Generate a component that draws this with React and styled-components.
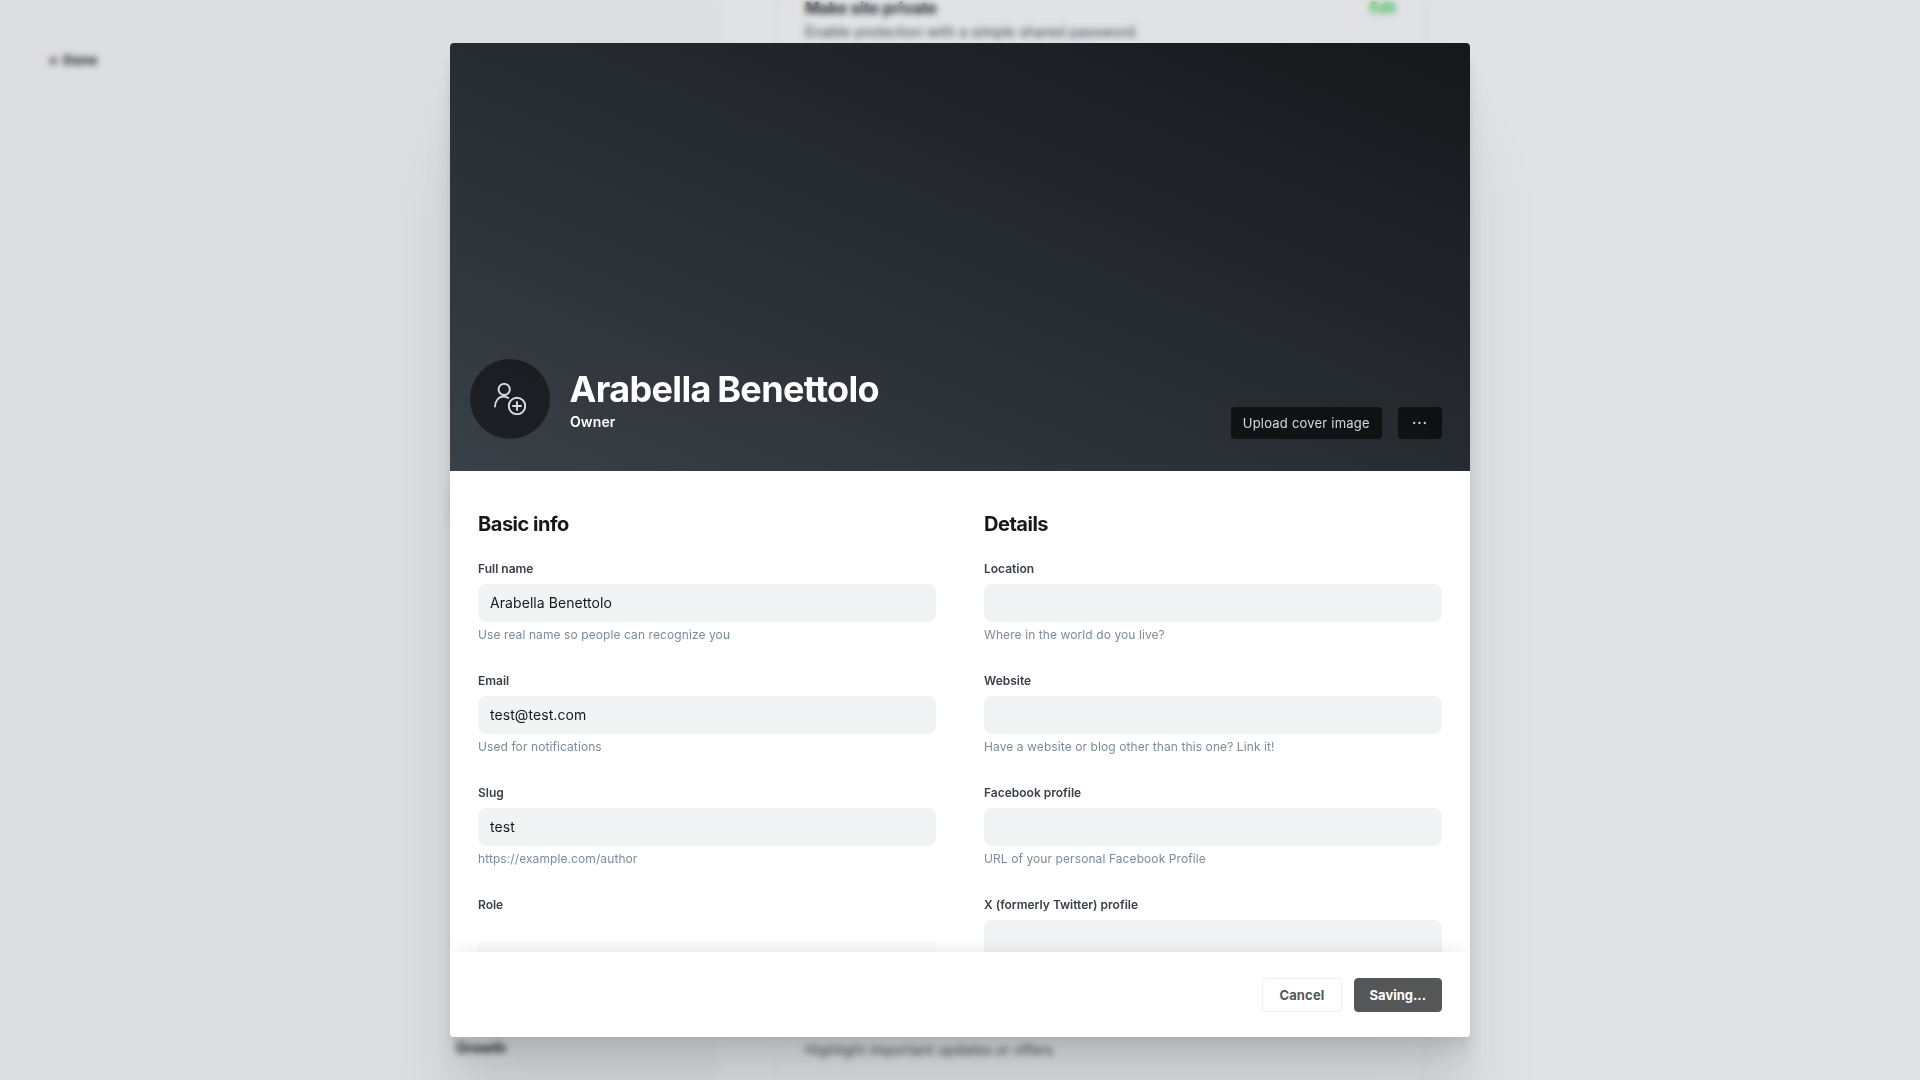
import React from 'react';
import styled, { createGlobalStyle } from 'styled-components';

const GlobalStyle = createGlobalStyle`
  *, *::before, *::after { box-sizing: border-box; }
  html, body { margin: 0; height: 100%; overflow: hidden; }
  body {
    font-family: Inter, "Liberation Sans", sans-serif;
    font-size: 14px;
    line-height: 1.5;
    color: #15171a;
    background: #fff;
    -webkit-font-smoothing: antialiased;
  }
  h1, h2, h3, p { margin: 0; }
  button, input { font-family: inherit; }
`;

const Shell = styled.div`
  position: relative;
  width: 100%;
  height: 1080px;
  overflow: hidden;
`;

const Settings = styled.div`
  display: flex;
  height: 100%;
`;

const Sidebar = styled.aside`
  display: flex;
  flex-direction: column;
  align-items: flex-end;
  width: 720px;
  padding: 48px 0 20px 48px;
  background: #fafafb;
`;

const Done = styled.div`
  display: flex;
  align-items: center;
  align-self: flex-start;
  gap: 4px;
  font-size: 13.5px;
  font-weight: 700;
  line-height: 24px;
  color: #15171a;
`;

const DoneArrow = styled.span`
  width: 11px;
  font-size: 13px;
`;

const ActiveNavItem = styled.div`
  width: 273px;
  height: 34px;
  margin: 417px 0 auto;
  border-radius: 6px;
  background: #ebeef0;
`;

const NavGroup = styled.div`
  width: 264px;
  font-size: 14px;
  font-weight: 700;
  line-height: 24px;
  color: #15171a;
`;

const Main = styled.main`
  display: flex;
  flex-direction: column;
  justify-content: space-between;
  width: 706px;
  padding-left: 56px;
`;

const Card = styled.section`
  display: flex;
  justify-content: space-between;
  height: ${(p) => p.$height}px;
  padding: ${(p) => p.$padding};
  border: 1px solid #ebeef0;
  border-width: ${(p) => (p.$edge === 'top' ? '0 1px 1px' : '1px 1px 0')};
`;

const CardTitle = styled.h3`
  margin-bottom: 5px;
  font-size: 16px;
  font-weight: 700;
  line-height: 16px;
  letter-spacing: -0.12px;
`;

const CardText = styled.p`
  margin-top: 2px;
  font-size: 14px;
  line-height: 22px;
  letter-spacing: 0.12px;
  color: #394047;
`;

const EditLink = styled.span`
  font-size: 14px;
  font-weight: 700;
  line-height: 16px;
  color: #30cf43;
`;

const Backdrop = styled.div`
  position: absolute;
  inset: 0;
  display: flex;
  justify-content: center;
  align-items: center;
  background: rgba(98, 109, 121, 0.2);
  backdrop-filter: blur(3px);
`;

const Modal = styled.section`
  display: flex;
  flex-direction: column;
  width: 1020px;
  height: 994px;
  border-radius: 4px;
  background: #fff;
  overflow: hidden;
  box-shadow:
    0 2.8px 2.2px rgba(0, 0, 0, 0.02),
    0 6.7px 5.3px rgba(0, 0, 0, 0.028),
    0 12.5px 10px rgba(0, 0, 0, 0.035),
    0 22.3px 17.9px rgba(0, 0, 0, 0.042),
    0 41.8px 33.4px rgba(0, 0, 0, 0.05),
    0 100px 80px rgba(0, 0, 0, 0.07);
`;

const Cover = styled.header`
  display: flex;
  align-items: flex-end;
  justify-content: space-between;
  flex: none;
  height: 428px;
  padding: 0 28px 32px 20px;
  background: linear-gradient(to top right, #394047, #15171a);
`;

const Identity = styled.div`
  display: flex;
  align-items: center;
  gap: 20px;
`;

const Avatar = styled.div`
  display: flex;
  align-items: center;
  justify-content: center;
  width: 80px;
  height: 80px;
  border-radius: 50%;
  background: rgba(0, 0, 0, 0.48);
`;

const Titles = styled.div`
  padding-top: 2px;
`;

const Name = styled.h1`
  margin-left: -0.5px;
  font-size: 36px;
  font-weight: 700;
  line-height: 42px;
  letter-spacing: -0.66px;
  word-spacing: -1.4px;
  color: #fff;
`;

const RoleName = styled.p`
  margin-top: 1px;
  font-size: 14px;
  font-weight: 600;
  line-height: 21px;
  letter-spacing: 0.1px;
  color: #fff;
`;

const CoverActions = styled.div`
  display: flex;
  gap: 16px;
`;

const CoverButton = styled.button`
  display: flex;
  align-items: center;
  justify-content: center;
  width: ${(p) => p.$width}px;
  height: 32px;
  padding: 0;
  border: 0;
  border-radius: 4px;
  background: rgba(0, 0, 0, 0.75);
  opacity: 0.8;
  font-size: 13px;
  letter-spacing: 0.22px;
  white-space: nowrap;
  color: #fff;
`;

const Body = styled.div`
  display: grid;
  grid-template-columns: 1fr 1fr;
  gap: 48px;
  flex: 1;
  min-height: 0;
  padding: 38px 28px 0;
  overflow: hidden;
`;

const Heading = styled.h2`
  margin-bottom: 18px;
  font-size: 20px;
  font-weight: 700;
  line-height: 30px;
  letter-spacing: -0.48px;
`;

const Field = styled.div`
  display: flex;
  flex-direction: column;
  height: 112px;
`;

const Label = styled.label`
  flex: none;
  height: 27px;
  font-size: 12px;
  font-weight: 600;
  line-height: 24px;
  color: #394047;
`;

const Input = styled.input`
  flex: none;
  width: 100%;
  height: 38px;
  padding: 0 12px 2px;
  border: 0;
  border-radius: 8px;
  outline: 0;
  background: #f1f3f4;
  font-size: 14px;
  letter-spacing: 0.07px;
  color: #15171a;
`;

const Hint = styled.p`
  margin-top: 4px;
  font-size: 12px;
  line-height: 18px;
  letter-spacing: 0.09px;
  color: #7c8b9a;
`;

const RolePanel = styled.div`
  flex: none;
  height: 80px;
  margin-top: 22px;
  background: #f8f9fa;
`;

const Footer = styled.footer`
  position: relative;
  display: flex;
  align-items: center;
  justify-content: flex-end;
  gap: 12px;
  flex: none;
  height: 85px;
  padding: 0 28px;
  background: #fff;
  box-shadow: 0 0 24px -8px rgba(0, 0, 0, 0.2);
`;

const FooterButton = styled.button`
  width: ${(p) => p.$width}px;
  height: 34px;
  padding: 0;
  border: 1px solid ${(p) => (p.$primary ? '#555658' : '#eef0f1')};
  border-radius: 4px;
  background: ${(p) => (p.$primary ? '#555658' : '#fff')};
  font-size: 13px;
  font-weight: 700;
  letter-spacing: ${(p) => (p.$primary ? 0 : 0.15)}px;
  color: ${(p) => (p.$primary ? '#fff' : '#555658')};
`;

const UserAddIcon = () => (
  <svg width="32" height="32" viewBox="0 0 32 32" fill="none" stroke="#dcdde0" strokeWidth="1.9" strokeLinecap="round" strokeLinejoin="round">
    <circle cx="10.2" cy="6.4" r="5.6" />
    <path d="M1 23.5C1.200 17.500 4.800 13.500 9.500 13.500c1.900 0 3.500.5 4.700 1.400" />
    <circle cx="23" cy="23" r="8.200" />
    <path d="M23 19v8M19 23h8" />
  </svg>
);

const DotsIcon = () => (
  <svg width="14" height="14" viewBox="0 0 14 14" fill="#fff">
    <circle cx="1.200" cy="7" r="1.150" />
    <circle cx="6.500" cy="7" r="1.150" />
    <circle cx="11.800" cy="7" r="1.150" />
  </svg>
);

const basics = [
  { label: 'Full name', value: 'Arabella Benettolo', hint: 'Use real name so people can recognize you' },
  { label: 'Email', value: 'test@test.com', hint: 'Used for notifications' },
  { label: 'Slug', value: 'test', hint: 'https://example.com/author' },
];

const details = [
  { label: 'Location', hint: 'Where in the world do you live?' },
  { label: 'Website', hint: 'Have a website or blog other than this one? Link it!' },
  { label: 'Facebook profile', hint: 'URL of your personal Facebook Profile' },
  { label: 'X (formerly Twitter) profile' },
];

const TextField = ({ label, value = '', hint }) => (
  <Field>
    <Label>{label}</Label>
    <Input defaultValue={value} />
    {hint && <Hint>{hint}</Hint>}
  </Field>
);

export default function App() {
  return (
    <Shell>
      <GlobalStyle />
      <Settings>
        <Sidebar>
          <Done><DoneArrow>←</DoneArrow>Done</Done>
          <ActiveNavItem />
          <NavGroup>Growth</NavGroup>
        </Sidebar>
        <Main>
          <Card $height={68} $padding="0 29px 0 28px" $edge="top">
            <div>
              <CardTitle>Make site private</CardTitle>
              <CardText>Enable protection with a simple shared password.</CardText>
            </div>
            <EditLink>Edit</EditLink>
          </Card>
          <Card $height={66} $padding="22px 29px 0 28px" $edge="bottom">
            <CardText>Highlight important updates or offers</CardText>
          </Card>
        </Main>
      </Settings>
      <Backdrop>
        <Modal>
          <Cover>
            <Identity>
              <Avatar><UserAddIcon /></Avatar>
              <Titles>
                <Name>Arabella Benettolo</Name>
                <RoleName>Owner</RoleName>
              </Titles>
            </Identity>
            <CoverActions>
              <CoverButton $width={151.4}>Upload cover image</CoverButton>
              <CoverButton $width={44} aria-label="More"><DotsIcon /></CoverButton>
            </CoverActions>
          </Cover>
          <Body>
            <div>
              <Heading>Basic info</Heading>
              {basics.map((f) => <TextField key={f.label} {...f} />)}
              <Field>
                <Label>Role</Label>
                <RolePanel />
              </Field>
            </div>
            <div>
              <Heading>Details</Heading>
              {details.map((f) => <TextField key={f.label} {...f} />)}
            </div>
          </Body>
          <Footer>
            <FooterButton $width={79.4}>Cancel</FooterButton>
            <FooterButton $width={88.4} $primary>Saving...</FooterButton>
          </Footer>
        </Modal>
      </Backdrop>
    </Shell>
  );
}
